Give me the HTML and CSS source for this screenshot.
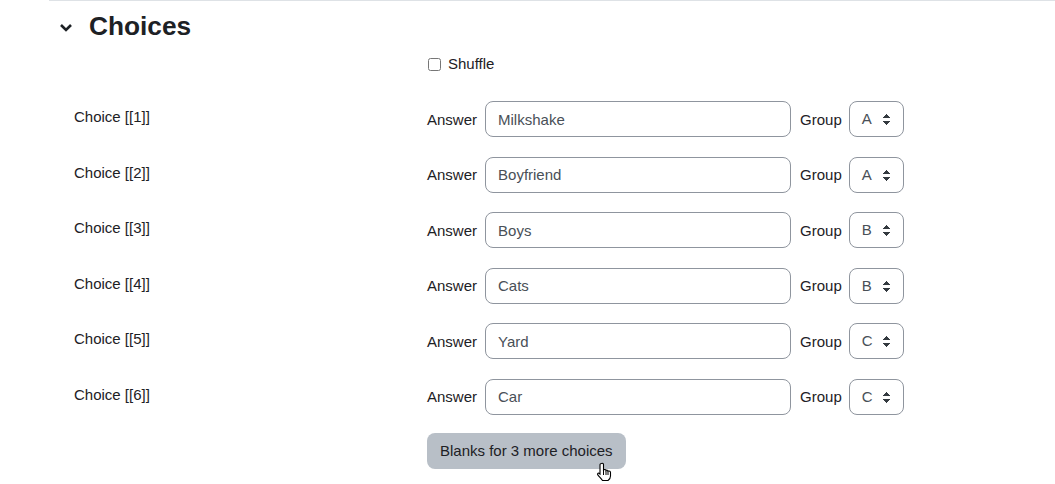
FILE: index.html
```html
<!DOCTYPE html>
<html lang="en">
  <head>
    <meta charset="UTF-8" />
    <title>Choices</title>
    <link rel="stylesheet" href="styles.css">
  </head>
  <body>
    <fieldset class="section">
      <div class="legend">
        <svg class="chevron" width="16" height="12" viewBox="0 0 16 12">
          <path d="M3 3 L8 8 L13 3" fill="none" stroke="#1d2125" stroke-width="2.6" />
        </svg>
        <h3>Choices</h3>
      </div>

      <div class="row shuffle-row">
        <div class="label-col"></div>
        <label class="check"><input type="checkbox" /> Shuffle</label>
      </div>

      <div class="row">
        <div class="label-col">Choice [[1]]</div>
        <div class="fields">
          <span class="field-label">Answer</span>
          <input class="answer" type="text" value="Milkshake" />
          <span class="field-label group-label">Group</span>
          <div class="select">A</div>
        </div>
      </div>
      <div class="row">
        <div class="label-col">Choice [[2]]</div>
        <div class="fields">
          <span class="field-label">Answer</span>
          <input class="answer" type="text" value="Boyfriend" />
          <span class="field-label group-label">Group</span>
          <div class="select">A</div>
        </div>
      </div>
      <div class="row">
        <div class="label-col">Choice [[3]]</div>
        <div class="fields">
          <span class="field-label">Answer</span>
          <input class="answer" type="text" value="Boys" />
          <span class="field-label group-label">Group</span>
          <div class="select">B</div>
        </div>
      </div>
      <div class="row">
        <div class="label-col">Choice [[4]]</div>
        <div class="fields">
          <span class="field-label">Answer</span>
          <input class="answer" type="text" value="Cats" />
          <span class="field-label group-label">Group</span>
          <div class="select">B</div>
        </div>
      </div>
      <div class="row">
        <div class="label-col">Choice [[5]]</div>
        <div class="fields">
          <span class="field-label">Answer</span>
          <input class="answer" type="text" value="Yard" />
          <span class="field-label group-label">Group</span>
          <div class="select">C</div>
        </div>
      </div>
      <div class="row">
        <div class="label-col">Choice [[6]]</div>
        <div class="fields">
          <span class="field-label">Answer</span>
          <input class="answer" type="text" value="Car" />
          <span class="field-label group-label">Group</span>
          <div class="select">C</div>
        </div>
      </div>

      <div class="row button-row">
        <div class="label-col"></div>
        <div class="btn-wrap">
          <button type="button">Blanks for 3 more choices</button>
          <svg class="cursor" width="18" height="20" viewBox="0 0 18 20">
            <path d="M5.5 1.5 C6.5 1 7.5 1.5 7.5 2.5 L7.5 8 L8.5 7.5 C9.3 7.3 10 7.8 10 8.5 L10.5 8.2 C11.3 8 12 8.5 12 9.2 L12.5 9 C13.3 8.8 14.5 9.3 14.5 10.5 L14.5 14 C14.5 16 13.5 17.5 12 18.5 L6.5 18.5 C5.5 17 3.5 15 1.8 12.8 C1.2 12 1.8 10.8 3 11.2 L4 12 L4 2.5 C4 2 4.5 1.6 5.5 1.5 Z" fill="#fff" stroke="#000" stroke-width="1.1" />
            <path d="M7.5 8 L7.5 13 M10 8.5 L10 13 M12 9.2 L12 13" fill="none" stroke="#000" stroke-width="1" />
          </svg>
        </div>
      </div>
    </fieldset>
  </body>
</html>
```

FILE: styles.css
```css
* {
  box-sizing: border-box;
}

body {
  margin: 0;
  font-family: "Liberation Sans", Arial, sans-serif;
  font-size: 15px;
  color: #1d2125;
  background-color: #ffffff;
}

.section {
  margin: 0 0 0 49px;
  padding: 0;
  border: none;
  border-top: 1px solid #dee2e6;
  min-width: 0;
}

.legend {
  display: flex;
  align-items: center;
  padding-top: 10px;
  height: 41px;
}

.chevron {
  margin-left: 9px;
  margin-right: 15px;
  margin-top: 2px;
}

.legend h3 {
  margin: 0;
  font-size: 26.25px;
  font-weight: 700;
  line-height: 1.2;
}

.row {
  display: flex;
  align-items: flex-start;
  margin-bottom: 19.6px;
}

.label-col {
  width: 378px;
  flex-shrink: 0;
  padding-left: 25px;
  padding-top: 5px;
  line-height: 22px;
}

.shuffle-row {
  margin-top: 11px;
  margin-bottom: 26px;
}

.shuffle-row .label-col {
  padding-top: 0;
}

.check {
  display: flex;
  align-items: center;
  line-height: 22px;
}

.check input {
  width: 13px;
  height: 13px;
  margin: 0 7px 0 1px;
}

.fields {
  display: flex;
  align-items: center;
  height: 36px;
}

.field-label {
  margin-right: 8px;
}

.group-label {
  margin-left: 9px;
  margin-right: 7px;
}

.answer {
  width: 306px;
  height: 36px;
  padding: 0 12px;
  border: 1px solid #8f959e;
  border-radius: 8px;
  font-family: inherit;
  font-size: 15px;
  color: #495057;
}

.select {
  position: relative;
  width: 55px;
  height: 36px;
  padding-left: 12px;
  border: 1px solid #8f959e;
  border-radius: 8px;
  line-height: 34px;
  color: #495057;
}

.select::after {
  content: "";
  position: absolute;
  right: 12px;
  top: 12px;
  width: 9px;
  height: 11px;
  background:
    linear-gradient(to bottom right, transparent 50%, #343a40 50%) 0 0 / 4.5px 4px no-repeat,
    linear-gradient(to bottom left, transparent 50%, #343a40 50%) 4.5px 0 / 4.5px 4px no-repeat,
    linear-gradient(to top right, transparent 50%, #343a40 50%) 0 7px / 4.5px 4px no-repeat,
    linear-gradient(to top left, transparent 50%, #343a40 50%) 4.5px 7px / 4.5px 4px no-repeat;
}

.button-row {
  margin-top: -1.6px;
}

.btn-wrap {
  position: relative;
}

button {
  height: 36px;
  padding: 0 13px;
  background-color: #b8bfc7;
  color: #1d2125;
  border: none;
  border-radius: 8px;
  font-family: inherit;
  font-size: 15px;
  cursor: pointer;
}

.cursor {
  position: absolute;
  left: 169px;
  top: 29px;
}
```
